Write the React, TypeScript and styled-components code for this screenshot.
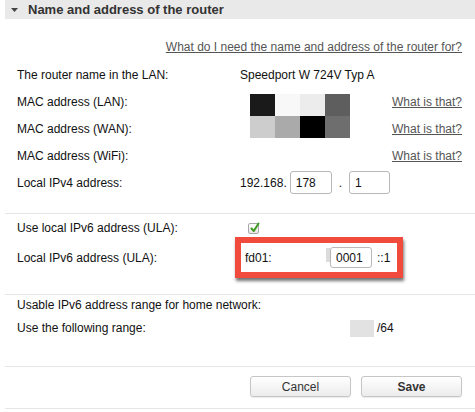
import React from "react";
import styled, { createGlobalStyle } from "styled-components";

const Global = createGlobalStyle`
  html, body { margin: 0; padding: 0; background: #fff; }
  body {
    font-family: "Liberation Sans", Arial, sans-serif;
    font-size: 12px;
    color: #111;
  }
  * { box-sizing: border-box; }
`;

const Page = styled.div`
  width: 475px;
  padding-left: 5px;
`;

const Header = styled.div`
  height: 19px;
  background: #e9e9e9;
  display: flex;
  align-items: center;
  padding-left: 6px;
`;

const Title = styled.span`
  font-size: 13px;
  font-weight: bold;
  color: #333;
  margin-left: 10px;
`;

const Section = styled.div<{ $pt?: number; $pb?: number }>`
  padding: ${(p) => p.$pt ?? 0}px 13px ${(p) => p.$pb ?? 0}px 12px;
`;

const Divider = styled.div`
  height: 1px;
  background: #e6e6e6;
`;

const TopLinkRow = styled.div`
  display: flex;
  justify-content: flex-end;
  padding-top: 20px;
  height: 36px;
  line-height: 16px;
  margin-bottom: 6px;
`;

const Link = styled.a`
  color: #555;
  text-decoration: underline;
  cursor: pointer;
`;

const Grid = styled.div`
  display: grid;
  grid-template-columns: 223px 1fr auto;
  grid-auto-rows: 27px;
  align-items: center;
`;

const Label = styled.div<{ $row: number }>`
  grid-column: 1;
  grid-row: ${(p) => p.$row};
`;

const Value = styled.div<{ $row: number; $span?: number }>`
  grid-column: 2 / span ${(p) => p.$span ?? 1};
  grid-row: ${(p) => p.$row};
  display: flex;
  align-items: center;
`;

const Help = styled.div<{ $row: number }>`
  grid-column: 3;
  grid-row: ${(p) => p.$row};
  justify-self: end;
`;

const MacBlock = styled.div`
  grid-column: 2;
  grid-row: 2 / span 2;
  align-self: center;
  margin-left: 10px;
  margin-top: 1px;
  display: grid;
  grid-template-columns: repeat(4, 25px);
  grid-template-rows: repeat(2, 22px);
`;

const Pixel = styled.div<{ $c: string }>`
  background: ${(p) => p.$c};
`;

const Input = styled.div<{ $w?: number; $h?: number }>`
  width: ${(p) => p.$w ?? 42}px;
  height: ${(p) => p.$h ?? 23}px;
  border: 1px solid #b8b8b8;
  border-radius: 3px;
  background: #fff;
  display: flex;
  align-items: center;
  padding-left: 5px;
  color: #111;
`;

const Dot = styled.span`
  margin: 0 7px 0 7px;
`;

const Row = styled.div<{ $h: number; $pt?: number }>`
  display: flex;
  align-items: center;
  height: ${(p) => p.$h}px;
  padding-top: ${(p) => p.$pt ?? 0}px;
`;

const RowLabel = styled.div`
  width: 223px;
  flex-shrink: 0;
  white-space: nowrap;
`;

const CheckBox = styled.div`
  width: 11px;
  height: 11px;
  margin-left: 8px;
  border: 1px solid #a8a8a8;
  border-radius: 2px;
  background: linear-gradient(#fff, #e6e6e6);
  position: relative;
  svg {
    position: absolute;
    left: 0px;
    top: -2px;
  }
`;

const Highlight = styled.div`
  width: 168px;
  height: 41px;
  margin-left: -5px;
  border: 6px solid #f04b3c;
  box-shadow: 1px 3px 3px rgba(0, 0, 0, 0.55);
  background: #fff;
  display: flex;
  align-items: center;
  padding-left: 4px;
`;

const Prefix = styled.span`
  width: 81px;
  flex-shrink: 0;
`;

const Sliver = styled.div`
  width: 4px;
  height: 14px;
  background: #dcdcdc;
  margin-top: -6px;
`;

const Suffix = styled.span`
  margin-left: 5px;
`;

const RangeBlock = styled.div`
  width: 24px;
  height: 17px;
  background: #e2e2e2;
  margin-left: 110px;
`;

const ButtonBar = styled.div`
  display: flex;
  justify-content: flex-end;
  gap: 10px;
  padding: 9px 13px 11px 0;
`;

const Button = styled.button<{ $primary?: boolean }>`
  width: 101px;
  height: 21px;
  border: 1px solid #c6c6c6;
  border-radius: 3px;
  background: linear-gradient(#ffffff, #ececec);
  box-shadow: 0 1px 1px rgba(0, 0, 0, 0.08);
  font-family: "Liberation Sans", Arial, sans-serif;
  font-size: 12px;
  font-weight: ${(p) => (p.$primary ? "bold" : "normal")};
  color: #333;
  padding: 0;
`;

const macColors = [
  "#1a1a1a", "#f8f8f8", "#ececec", "#5e5e5e",
  "#cdcdcd", "#aaaaaa", "#000000", "#6e6e6e",
];

export default function App() {
  return (
    <>
      <Global />
      <Page>
        <Header>
          <svg width="7" height="4" viewBox="0 0 7 4">
            <polygon points="0,0 7,0 3.5,4" fill="#444" />
          </svg>
          <Title>Name and address of the router</Title>
        </Header>

        <Section $pb={17}>
          <TopLinkRow>
            <Link>What do I need the name and address of the router for?</Link>
          </TopLinkRow>
          <Grid>
            <Label $row={1}>The router name in the LAN:</Label>
            <Value $row={1} $span={2}>Speedport W 724V Typ A</Value>

            <Label $row={2}>MAC address (LAN):</Label>
            <Label $row={3}>MAC address (WAN):</Label>
            <Label $row={4}>MAC address (WiFi):</Label>
            <MacBlock>
              {macColors.map((c, i) => (
                <Pixel key={i} $c={c} />
              ))}
            </MacBlock>
            <Help $row={2}><Link>What is that?</Link></Help>
            <Help $row={3}><Link>What is that?</Link></Help>
            <Help $row={4}><Link>What is that?</Link></Help>

            <Label $row={5}>Local IPv4 address:</Label>
            <Value $row={5}>
              192.168.
              <Input style={{ marginLeft: 3 }}>178</Input>
              <Dot>.</Dot>
              <Input $w={41}>1</Input>
            </Value>
          </Grid>
        </Section>

        <Divider />

        <Section $pb={16}>
          <Row $h={23} $pt={5}>
            <RowLabel>Use local IPv6 address (ULA):</RowLabel>
            <CheckBox>
              <svg width="12" height="12" viewBox="0 0 12 12">
                <path d="M2.5 6.5 L4.8 9 L9.5 1.5" stroke="#3f9a22" strokeWidth="2" fill="none" strokeLinecap="round" strokeLinejoin="round" />
              </svg>
            </CheckBox>
          </Row>
          <Row $h={41}>
            <RowLabel>Local IPv6 address (ULA):</RowLabel>
            <Highlight>
              <Prefix>fd01:</Prefix>
              <Sliver />
              <Input $w={42} $h={21}>0001</Input>
              <Suffix>::1</Suffix>
            </Highlight>
          </Row>
        </Section>

        <Divider />

        <Section $pb={25}>
          <Row $h={20}>
            <RowLabel>Usable IPv6 address range for home network:</RowLabel>
          </Row>
          <Row $h={26}>
            <RowLabel>Use the following range:</RowLabel>
            <RangeBlock />
            <Suffix style={{ marginLeft: 3 }}>/64</Suffix>
          </Row>
        </Section>

        <Divider />

        <ButtonBar>
          <Button>Cancel</Button>
          <Button $primary>Save</Button>
        </ButtonBar>

        <Divider />
      </Page>
    </>
  );
}
